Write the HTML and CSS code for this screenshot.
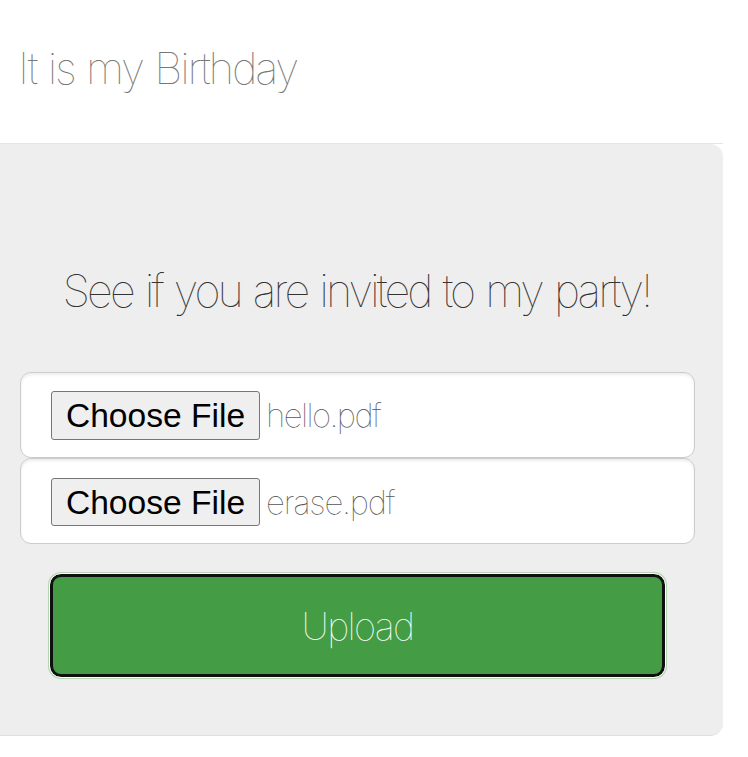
FILE: index.html
```html
<!DOCTYPE html>
<html lang="en">
<head>
<meta charset="utf-8">
<title>It is my Birthday</title>
<link rel="stylesheet" href="styles.css">
</head>
<body>
<header class="header"><h3 class="title"><span>It is my Birthday</span></h3></header>
<main class="jumbotron">
  <h1 class="heading"><span>See if you are invited to my party!</span></h1>
  <form class="form">
    <div class="field"><button type="button" class="choose">Choose File</button><span class="name">hello.pdf</span></div>
    <div class="field second"><button type="button" class="choose">Choose File</button><span class="name">erase.pdf</span></div>
    <button type="button" class="upload"><span>Upload</span></button>
  </form>
</main>
</body>
</html>
```
FILE: styles.css
```css
* { box-sizing: border-box; }
body {
  margin: 0;
  width: 723px;
  background: #fff;
  color: #333;
  font-family: Inter, "Liberation Sans", sans-serif;
  font-weight: 100;
}
.header {
  height: 144px;
  padding: 42px 18px 0;
  border-bottom: 1px solid #e5e5e5;
}
.title, .heading { margin: 0; font-weight: 100; white-space: nowrap; }
.title { font-size: 44px; line-height: 52px; color: #777; letter-spacing: -2.25px; word-spacing: 1.5px; }
.jumbotron {
  height: 592px;
  padding: 121px 28px 0 20px;
  background: #eee;
  border-bottom: 1px solid #e0e0e0;
  border-radius: 0 13px 13px 0;
}
.heading {
  height: 107px;
  padding-left: 42.5px;
  font-size: 45px;
  line-height: 52px;
  letter-spacing: -2.95px;
  word-spacing: 2.3px;
}
.form { display: flex; flex-direction: column; }
.field {
  display: flex;
  align-items: center;
  height: 86px;
  padding-left: 30px;
  border: 1px solid #ccc;
  border-radius: 11px;
  background: #fff;
  box-shadow: inset 0 2px 3px rgba(0, 0, 0, .075);
}
.choose {
  width: 209px;
  height: 49px;
  padding: 0;
  border: 1px solid #767676;
  border-radius: 3px;
  background: #efefef;
  color: #000;
  font: 33.6px/48px "Liberation Sans", Arial, sans-serif;
}
.name { margin-left: 6px; font-size: 33px; letter-spacing: -1.6px; color: #555; }
.second { padding-top: 2px; }
.second .choose { height: 48px; }
.second .name { letter-spacing: -1.2px; }
.upload {
  height: 103px;
  margin: 30px 30px 0;
  padding: 0;
  border: 3px solid #101010;
  border-radius: 11px;
  outline: 1px solid #fff;
  box-shadow: 0 0 0 2px #b4d4b2;
  background: #449d44;
  color: #fff;
  font: 100 38px/46px Inter, "Liberation Sans", sans-serif;
  letter-spacing: -1.7px;
}
```
